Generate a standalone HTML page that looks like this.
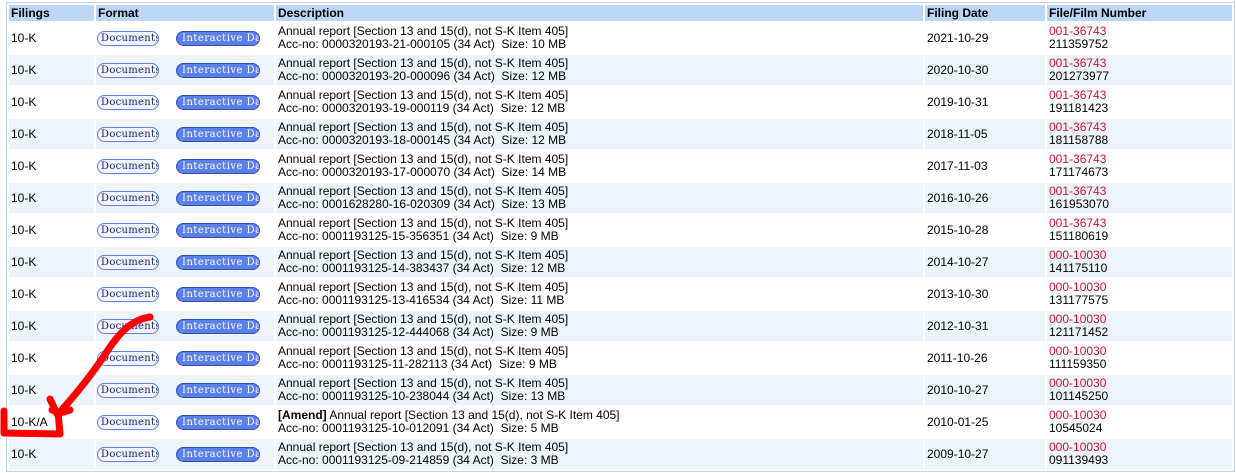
<!DOCTYPE html>
<html><head><meta charset="utf-8"><style>
body{margin:0;background:#fff;width:1236px;height:473px;overflow:hidden;position:relative;font-family:"Liberation Sans",sans-serif;font-size:12px;color:#000}
table{position:absolute;left:6px;top:2px;border:1px solid #b9d3f4;border-spacing:2px;table-layout:fixed;border-collapse:separate}
td,th{padding:0 0 0 2px;vertical-align:middle;line-height:13px;white-space:nowrap;overflow:hidden}
th{height:16px;background:#bcd6f7;text-align:left;font-size:12px;font-weight:bold}
td{height:30px}
tr.a td{background:#fff}
tr.b td{background:#eef4fc}
.fmt{position:relative}
.d{position:absolute;left:1px;top:8px;width:57px;height:13px;border:1px solid #5b7fe8;border-radius:8px;background:#f4f6ff;font:10px "DejaVu Serif",serif;color:#1a1a6e;line-height:13px;padding-left:3px;box-sizing:content-box;overflow:hidden;letter-spacing:.3px}
.i{position:absolute;left:80px;top:8px;width:84px;height:15px;border:1px solid #2e4fb8;border-radius:8px;background:#5b80e9;font:10px "DejaVu Serif",serif;color:#fff;line-height:14px;padding-left:5px;box-sizing:border-box;overflow:hidden;letter-spacing:.5px}
.r{color:#d0102a}
</style></head><body>
<table>
<colgroup><col style="width:85px"><col style="width:178px"><col style="width:647px"><col style="width:120px"><col style="width:185px"></colgroup>
<tr><th>Filings</th><th>Format</th><th>Description</th><th>Filing Date</th><th>File/Film Number</th></tr>
<tr class="a"><td>10-K</td><td class="fmt"><span class="d">Documents</span><span class="i">Interactive Data</span></td><td>Annual report [Section 13 and 15(d), not S-K Item 405]<br>Acc-no: 0000320193-21-000105 (34 Act)&nbsp; Size: 10 MB</td><td>2021-10-29</td><td><span class="r">001-36743</span><br>211359752</td></tr>
<tr class="b"><td>10-K</td><td class="fmt"><span class="d">Documents</span><span class="i">Interactive Data</span></td><td>Annual report [Section 13 and 15(d), not S-K Item 405]<br>Acc-no: 0000320193-20-000096 (34 Act)&nbsp; Size: 12 MB</td><td>2020-10-30</td><td><span class="r">001-36743</span><br>201273977</td></tr>
<tr class="a"><td>10-K</td><td class="fmt"><span class="d">Documents</span><span class="i">Interactive Data</span></td><td>Annual report [Section 13 and 15(d), not S-K Item 405]<br>Acc-no: 0000320193-19-000119 (34 Act)&nbsp; Size: 12 MB</td><td>2019-10-31</td><td><span class="r">001-36743</span><br>191181423</td></tr>
<tr class="b"><td>10-K</td><td class="fmt"><span class="d">Documents</span><span class="i">Interactive Data</span></td><td>Annual report [Section 13 and 15(d), not S-K Item 405]<br>Acc-no: 0000320193-18-000145 (34 Act)&nbsp; Size: 12 MB</td><td>2018-11-05</td><td><span class="r">001-36743</span><br>181158788</td></tr>
<tr class="a"><td>10-K</td><td class="fmt"><span class="d">Documents</span><span class="i">Interactive Data</span></td><td>Annual report [Section 13 and 15(d), not S-K Item 405]<br>Acc-no: 0000320193-17-000070 (34 Act)&nbsp; Size: 14 MB</td><td>2017-11-03</td><td><span class="r">001-36743</span><br>171174673</td></tr>
<tr class="b"><td>10-K</td><td class="fmt"><span class="d">Documents</span><span class="i">Interactive Data</span></td><td>Annual report [Section 13 and 15(d), not S-K Item 405]<br>Acc-no: 0001628280-16-020309 (34 Act)&nbsp; Size: 13 MB</td><td>2016-10-26</td><td><span class="r">001-36743</span><br>161953070</td></tr>
<tr class="a"><td>10-K</td><td class="fmt"><span class="d">Documents</span><span class="i">Interactive Data</span></td><td>Annual report [Section 13 and 15(d), not S-K Item 405]<br>Acc-no: 0001193125-15-356351 (34 Act)&nbsp; Size: 9 MB</td><td>2015-10-28</td><td><span class="r">001-36743</span><br>151180619</td></tr>
<tr class="b"><td>10-K</td><td class="fmt"><span class="d">Documents</span><span class="i">Interactive Data</span></td><td>Annual report [Section 13 and 15(d), not S-K Item 405]<br>Acc-no: 0001193125-14-383437 (34 Act)&nbsp; Size: 12 MB</td><td>2014-10-27</td><td><span class="r">000-10030</span><br>141175110</td></tr>
<tr class="a"><td>10-K</td><td class="fmt"><span class="d">Documents</span><span class="i">Interactive Data</span></td><td>Annual report [Section 13 and 15(d), not S-K Item 405]<br>Acc-no: 0001193125-13-416534 (34 Act)&nbsp; Size: 11 MB</td><td>2013-10-30</td><td><span class="r">000-10030</span><br>131177575</td></tr>
<tr class="b"><td>10-K</td><td class="fmt"><span class="d">Documents</span><span class="i">Interactive Data</span></td><td>Annual report [Section 13 and 15(d), not S-K Item 405]<br>Acc-no: 0001193125-12-444068 (34 Act)&nbsp; Size: 9 MB</td><td>2012-10-31</td><td><span class="r">000-10030</span><br>121171452</td></tr>
<tr class="a"><td>10-K</td><td class="fmt"><span class="d">Documents</span><span class="i">Interactive Data</span></td><td>Annual report [Section 13 and 15(d), not S-K Item 405]<br>Acc-no: 0001193125-11-282113 (34 Act)&nbsp; Size: 9 MB</td><td>2011-10-26</td><td><span class="r">000-10030</span><br>111159350</td></tr>
<tr class="b"><td>10-K</td><td class="fmt"><span class="d">Documents</span><span class="i">Interactive Data</span></td><td>Annual report [Section 13 and 15(d), not S-K Item 405]<br>Acc-no: 0001193125-10-238044 (34 Act)&nbsp; Size: 13 MB</td><td>2010-10-27</td><td><span class="r">000-10030</span><br>101145250</td></tr>
<tr class="a"><td>10-K/A</td><td class="fmt"><span class="d">Documents</span><span class="i">Interactive Data</span></td><td><b>[Amend]</b> Annual report [Section 13 and 15(d), not S-K Item 405]<br>Acc-no: 0001193125-10-012091 (34 Act)&nbsp; Size: 5 MB</td><td>2010-01-25</td><td><span class="r">000-10030</span><br>10545024</td></tr>
<tr class="b"><td>10-K</td><td class="fmt"><span class="d">Documents</span><span class="i">Interactive Data</span></td><td>Annual report [Section 13 and 15(d), not S-K Item 405]<br>Acc-no: 0001193125-09-214859 (34 Act)&nbsp; Size: 3 MB</td><td>2009-10-27</td><td><span class="r">000-10030</span><br>091139493</td></tr>
</table>
<svg width="1236" height="473" style="position:absolute;left:0;top:0" fill="none" stroke="#ff0000" stroke-width="7" stroke-linecap="round" stroke-linejoin="round">
<path d="M150 317 C130 320 118 335 108 350 C95 370 80 390 58 414"/>
<path d="M50 399 L57 414 L70 410"/>
<path d="M4 411 L4 433 L60 434 L58 412 L52 410"/>
</svg>
</body></html>
